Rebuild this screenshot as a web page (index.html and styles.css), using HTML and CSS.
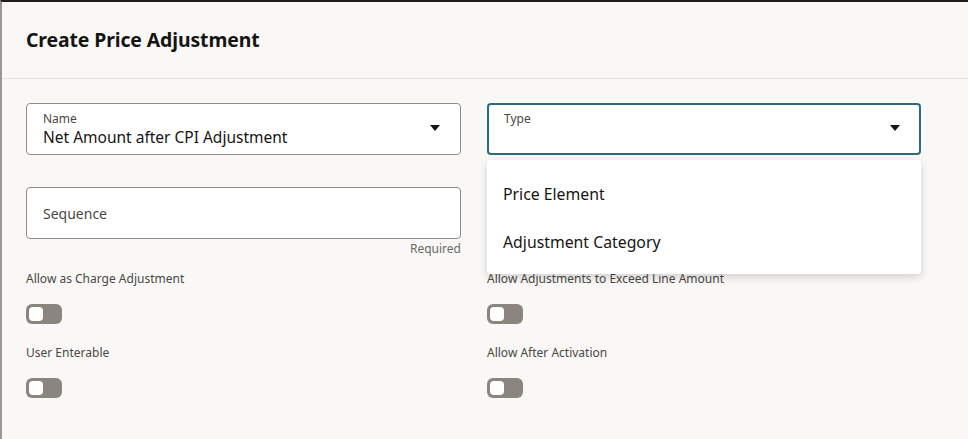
FILE: index.html
```html
<!DOCTYPE html>
<html lang="en">
<head>
  <meta charset="UTF-8">
  <title>Create Price Adjustment</title>
  <link rel="stylesheet" href="styles.css">
</head>
<body>
  <div class="dialog">
    <header class="dialog-header">
      <h1>Create Price Adjustment</h1>
    </header>

    <div class="dialog-body">
      <div class="form-grid">
        <div class="field">
          <div class="select-box">
            <div class="select-text">
              <span class="field-label">Name</span>
              <span class="field-value">Net Amount after CPI Adjustment</span>
            </div>
            <span class="caret"></span>
          </div>
        </div>

        <div class="field type-field">
          <div class="select-box focused">
            <div class="select-text">
              <span class="field-label">Type</span>
              <span class="field-value"></span>
            </div>
            <span class="caret"></span>
          </div>
          <ul class="dropdown">
            <li>Price Element</li>
            <li>Adjustment Category</li>
          </ul>
        </div>

        <div class="field">
          <div class="input-box">
            <span class="placeholder">Sequence</span>
          </div>
          <div class="helper">Required</div>
        </div>

        <div class="field"></div>

        <div class="switch-field">
          <span class="switch-label">Allow as Charge Adjustment</span>
          <span class="switch"><span class="knob"></span></span>
        </div>

        <div class="switch-field">
          <span class="switch-label">Allow Adjustments to Exceed Line Amount</span>
          <span class="switch"><span class="knob"></span></span>
        </div>

        <div class="switch-field">
          <span class="switch-label">User Enterable</span>
          <span class="switch"><span class="knob"></span></span>
        </div>

        <div class="switch-field">
          <span class="switch-label">Allow After Activation</span>
          <span class="switch"><span class="knob"></span></span>
        </div>
      </div>
    </div>
  </div>
</body>
</html>
```

FILE: styles.css
```css
body {
  margin: 0;
  font-family: 'Noto Sans', 'Open Sans', sans-serif;
  color: #161513;
  background: #f9f8f6;
  height: 439px;
  overflow: hidden;
}

.dialog {
  height: 100%;
  border-top: 2px solid #211f1c;
  border-left: 2px solid #9a9895;
  box-sizing: border-box;
  background: #f9f8f6;
}

.dialog-header {
  padding: 0 0 0 24px;
  height: 76px;
  display: flex;
  align-items: center;
  border-bottom: 1px solid #e7e4e0;
}

.dialog-header h1 {
  margin: 0;
  font-size: 19.4px;
  font-weight: 700;
  letter-spacing: -0.1px;
  padding-bottom: 1px;
}

.dialog-body {
  padding: 24px 47px 0 24px;
}

.form-grid {
  display: grid;
  grid-template-columns: 435px 434px;
  column-gap: 26px;
}

.field {
  position: relative;
  height: 84px;
}

.select-box,
.input-box {
  height: 52px;
  box-sizing: border-box;
  border: 1px solid #8f8c88;
  border-radius: 4px;
  background: #fff;
  display: flex;
  align-items: center;
  padding: 0 16px;
}

.select-box.focused {
  border: 2px solid #2c6a80;
  padding: 0 15px;
}

.select-text {
  flex: 1;
  display: flex;
  flex-direction: column;
  margin-top: -2px;
}

.field-label {
  font-size: 12px;
  color: #4a4744;
  line-height: 16px;
  padding-top: 2px;
}

.field-value {
  font-size: 15.5px;
  line-height: 20px;
  height: 20px;
  color: #161513;
}

.caret {
  width: 0;
  height: 0;
  border-left: 5px solid transparent;
  border-right: 5px solid transparent;
  border-top: 6px solid #161513;
  margin-right: 4px;
  margin-top: -2px;
}

.placeholder {
  font-size: 14px;
  color: #4a4744;
}

.helper {
  text-align: right;
  font-size: 12px;
  color: #6b6864;
  margin-top: 1px;
}

.dropdown {
  position: absolute;
  top: 57px;
  left: 0;
  right: 0;
  margin: 0;
  padding: 10px 0 8px;
  list-style: none;
  background: #fff;
  border-radius: 4px;
  box-shadow: 0 3px 8px rgba(0, 0, 0, 0.16);
  z-index: 5;
}

.dropdown li {
  height: 48px;
  display: flex;
  align-items: center;
  padding: 0 16px;
  font-size: 15.8px;
  color: #161513;
}

.switch-field {
  display: flex;
  flex-direction: column;
  align-items: flex-start;
  height: 74px;
}

.switch-label {
  font-size: 12px;
  color: #4a4744;
  line-height: 16px;
}

.switch {
  margin-top: 17px;
  width: 36px;
  height: 20px;
  border-radius: 6px;
  background: #8b8580;
  box-sizing: border-box;
  padding: 3px;
}

.knob {
  display: block;
  width: 14px;
  height: 14px;
  border-radius: 4px;
  background: #fff;
}
```
